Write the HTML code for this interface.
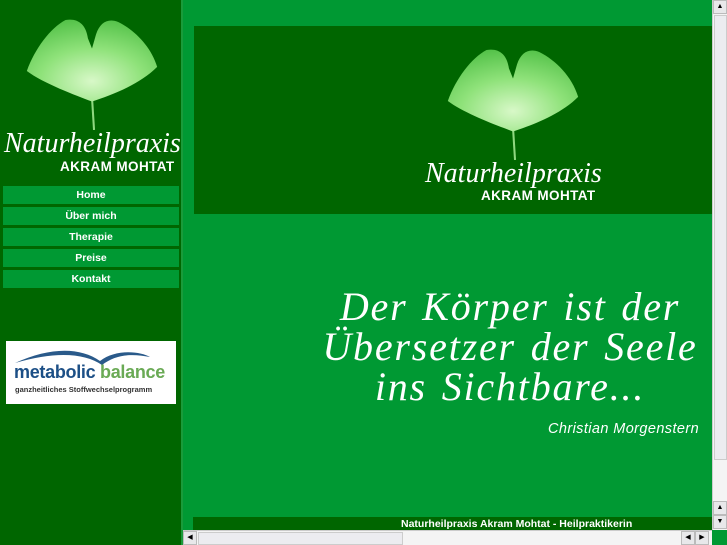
<!DOCTYPE html>
<html><head><meta charset="utf-8"><style>
*{margin:0;padding:0;box-sizing:border-box}
body{width:727px;height:545px;overflow:hidden;background:#009933;position:relative;font-family:"Liberation Sans",sans-serif}
#side{position:absolute;left:0;top:0;width:181px;height:545px;background:#006600}
#sideb{position:absolute;left:181px;top:0;width:2px;height:545px;background:#1a9a3a}
.nav{position:absolute;left:3px;width:176px;height:18px;background:#009933;color:#fff;font-weight:bold;font-size:10.5px;text-align:center;line-height:19px}
.logo1{position:absolute;font-family:"Liberation Serif",serif;font-style:italic;color:#fff}
.logo2{position:absolute;font-weight:bold;color:#fff;font-size:13.5px;letter-spacing:0.4px}
#head{position:absolute;left:194px;top:26px;width:518px;height:188px;background:#006600}
#quote{position:absolute;left:300px;top:287px;width:420px;text-align:center;color:#fff;font-family:"Liberation Serif",serif;font-style:italic;font-size:40px;line-height:40px;letter-spacing:1.8px;word-spacing:3px}
#auth{position:absolute;left:548px;top:421px;color:#fff;font-style:italic;font-size:14.5px;letter-spacing:0.4px}
#foot{position:absolute;left:193px;top:517px;width:519px;height:13px;background:#006600;color:#fff;font-size:10.5px;font-weight:bold;line-height:14px;padding-left:208px;white-space:nowrap}
#vs{position:absolute;left:712px;top:0;width:15px;height:530px;background:#f4f4f4;border-left:1px solid #ccc}
#hs{position:absolute;left:183px;top:530px;width:529px;height:15px;background:#f4f4f4;border-top:1px solid #ccc}
.btn{position:absolute;width:14px;height:14px;background:#e8e8ea;border:1px solid #bbb;font-size:7px;text-align:center;line-height:12px;color:#000}
#mb{position:absolute;left:6px;top:341px;width:170px;height:63px;background:#fff}
</style></head><body>
<div id="side"></div><div id="sideb"></div>
<svg style="position:absolute;left:24px;top:18px" width="136" height="112" viewBox="0 0 132 110">
<defs><radialGradient id="g" cx="0.5" cy="0.75" r="0.8"><stop offset="0" stop-color="#d8f8c8"/><stop offset="0.5" stop-color="#8fe27a"/><stop offset="1" stop-color="#4fbf45"/></radialGradient></defs>
<path d="M66,78 L68,110" stroke="#8fd880" stroke-width="2"/>
<path d="M66,82 C50,76 18,64 2,52 C10,30 25,10 40,2 C52,0 60,6 62,20 L66,30 L70,16 C74,4 82,0 92,4 C108,12 124,28 130,48 C112,66 84,76 66,82 Z" fill="url(#g)"/></svg>
<div class="logo1" style="left:4px;top:128px;font-size:28px">Naturheilpraxis</div>
<div class="logo2" style="left:60px;top:159px">AKRAM MOHTAT</div>
<div class="nav" style="top:186px">Home</div>
<div class="nav" style="top:207px">Über mich</div>
<div class="nav" style="top:228px">Therapie</div>
<div class="nav" style="top:249px">Preise</div>
<div class="nav" style="top:270px">Kontakt</div>
<div id="mb">
<svg style="position:absolute;left:4px;top:4px" width="160" height="22" viewBox="0 0 160 22"><path d="M5,18 C40,2 70,2 90,16 C105,4 130,6 140,12 C120,8 105,10 92,20 C75,8 45,6 5,18Z" fill="#2a5a8a"/></svg>
<div style="position:absolute;left:8px;top:21px;font-size:18px;font-weight:bold;color:#1c4f86;letter-spacing:-0.3px">metabolic <span style="color:#6aaa55">balance</span></div>
<div style="position:absolute;left:9px;top:44px;font-size:7.5px;font-weight:bold;color:#333">ganzheitliches Stoffwechselprogramm</div>
</div>
<div id="head"></div>
<svg style="position:absolute;left:445px;top:48px" width="136" height="112" viewBox="0 0 132 110">
<path d="M66,78 L68,110" stroke="#8fd880" stroke-width="2"/>
<path d="M66,82 C50,76 18,64 2,52 C10,30 25,10 40,2 C52,0 60,6 62,20 L66,30 L70,16 C74,4 82,0 92,4 C108,12 124,28 130,48 C112,66 84,76 66,82 Z" fill="url(#g)"/></svg>
<div class="logo1" style="left:425px;top:158px;font-size:28px">Naturheilpraxis</div>
<div class="logo2" style="left:481px;top:188px">AKRAM MOHTAT</div>
<div id="quote">Der Körper ist der<br>Übersetzer der Seele<br>ins Sichtbare...</div>
<div id="auth">Christian Morgenstern</div>
<div id="foot">Naturheilpraxis Akram Mohtat - Heilpraktikerin</div>
<div id="vs"><div style="position:absolute;left:1px;top:15px;width:13px;height:445px;background:#ececf0;border:1px solid #ccc"></div></div>
<div class="btn" style="left:713px;top:0">▲</div>
<div class="btn" style="left:713px;top:501px">▲</div>
<div class="btn" style="left:713px;top:515px">▼</div>
<div id="hs"><div style="position:absolute;left:15px;top:1px;width:205px;height:13px;background:#ececf0;border:1px solid #ccc"></div></div>
<div class="btn" style="left:183px;top:531px">◀</div>
<div class="btn" style="left:681px;top:531px">◀</div>
<div class="btn" style="left:695px;top:531px">▶</div>
</body></html>
